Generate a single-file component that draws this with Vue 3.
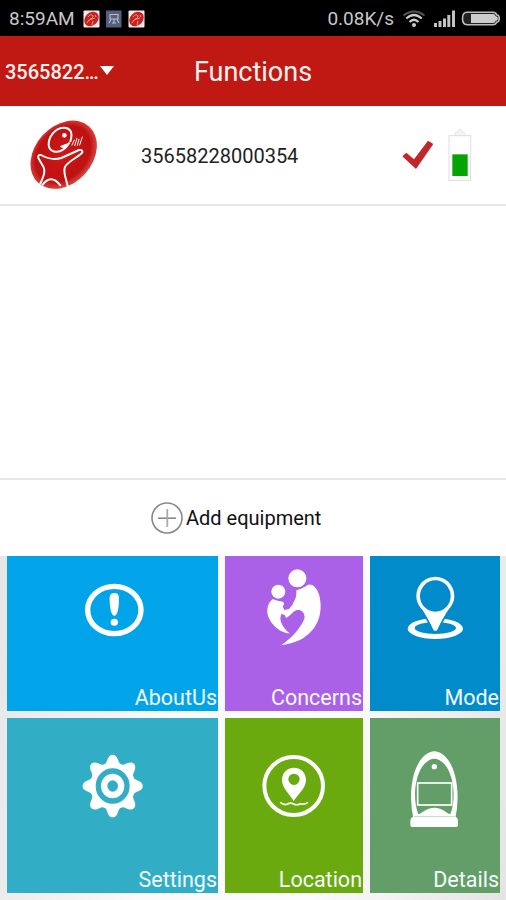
<script setup>
import { ref } from 'vue'

const devices = ref([
  { id: '35658228000354', selected: true }
])
const current = ref('3565822…')

const tiles = [
  { name: 'about', label: 'AboutUs', box: '21 18 633 465' },
  { name: 'concerns', label: 'Concerns', box: '30 18 414 465' },
  { name: 'mode', label: 'Mode', box: '30 18 390 465' },
  { name: 'settings', label: 'Settings', box: '21 24 633 525' },
  { name: 'location', label: 'Location', box: '30 24 414 525' },
  { name: 'details', label: 'Details', box: '30 24 390 525' }
]

const teeth = [0, 45, 90, 135, 180, 225, 270, 315]
</script>

<template>
  <div class="screen">
    <div class="status">
      <span class="time">8:59AM</span>
      <svg class="notes" width="64" height="18" viewBox="0 0 64 18">
        <g v-for="x in [0, 45]" :key="x" :transform="`translate(${x} 0)`">
          <rect x="0.5" y="0.5" width="16" height="17" rx="1" fill="#f4e9e7" />
          <ellipse cx="8.5" cy="9" rx="8" ry="6.3" transform="rotate(-45 8.5 9)" fill="#c9211e" />
          <path d="M5 7q3-4 5-1q0 3-3 3M4 13l2-3 6-2M9 15l1-4M12 5l1 2" fill="none" stroke="#eba39e" stroke-width="0.9" />
        </g>
        <rect x="23" y="0.5" width="15.5" height="17" fill="#56607c" />
        <path d="M27 4.500h8v4.500h-8zM28 9.500l-2 3.500M34 9.500l2 3.500M29 13h4M31 9.500v3" fill="none" stroke="#b9bfd0" stroke-width="1.1" />
      </svg>
      <span class="speed">0.08K/s</span>
      <svg class="signals" width="98" height="20" viewBox="0 0 98 20">
        <g fill="none" stroke-linecap="butt">
          <path d="M1.500 6.500Q12 -1.500 22.500 6.500" stroke="#555" stroke-width="1.800" />
          <path d="M4.300 9.500Q12 2.500 19.700 9.500" stroke="#ccc" stroke-width="2.200" />
          <path d="M7.500 13Q12 8.500 16.500 13" stroke="#ccc" stroke-width="2.200" />
        </g>
        <circle cx="12" cy="16" r="2" fill="#ccc" />
        <path d="M32 14h3v4h-3zM36.500 12h3v6h-3zM41 9.500h3v8.500h-3zM45.300 6h3v12h-3zM50 1.500h3v16.500h-3z" fill="#c4c4c4" />
        <path d="M65 3.300H91Q94 3.300 94.500 5.700Q97.300 6 97.300 9.500T94.500 13.300Q94 15.700 91 15.700H65Q60.500 15.700 60.500 9.500T65 3.300Z" fill="#222" stroke="#bbb" stroke-width="1.600" />
        <path d="M69 5H91Q93 5 93.500 7Q96 7.500 96 9.500T93.500 12Q93 14 91 14H69Z" fill="#ccc" />
      </svg>
    </div>

    <header class="header">
      <div class="picker">
        <span class="current">{{ current }}</span>
        <i class="caret"></i>
      </div>
      <h1>Functions</h1>
    </header>

    <ul class="devices">
      <li v-for="device in devices" :key="device.id" class="device">
        <svg class="avatar" width="70" height="70" viewBox="87 44 210 210">
          <defs>
            <radialGradient id="ball" cx="0.5" cy="0.48" r="0.55">
              <stop offset="0" stop-color="#cf1715" />
              <stop offset="0.75" stop-color="#bd1112" />
              <stop offset="0.9" stop-color="#d53c37" />
              <stop offset="1" stop-color="#b51a19" />
            </radialGradient>
            <clipPath id="oval">
              <ellipse cx="191" cy="148" rx="114" ry="86" transform="rotate(-48 191 148)" />
            </clipPath>
          </defs>
          <ellipse cx="191" cy="148" rx="114" ry="86" transform="rotate(-48 191 148)" fill="url(#ball)" />
          <g clip-path="url(#oval)" fill="none" stroke="#fff" stroke-width="6" stroke-linecap="round" stroke-linejoin="round">
            <path d="M211 108C221 78 208 66 190 67C164 68 145 96 146 119C148 140 172 145 189 133Q200 126 207 114" />
            <path d="M182 123L209 113L196 128Z" fill="#fff" stroke-width="3" />
            <path d="M216 119l7-15M224 121l7-22M232 120l5-18M239 119l8-24" stroke-width="3" />
            <path d="M114 252C122 228 140 204 130 184L115 158Q113 147 123 149Q155 167 184 158L237 134Q248 132 247 141C240 154 205 165 195 185C187 205 203 228 205 254" />
            <path d="M125 242Q152 203 181 240" />
          </g>
          <circle cx="193" cy="90" r="7" fill="#fff" />
        </svg>
        <span class="number">{{ device.id }}</span>
        <svg v-if="device.selected" class="check" width="32" height="30" viewBox="97 107 96 90">
          <path d="M98 156L110 145L133 165L175 109L191 119L139 194Z" fill="#c1272a" />
        </svg>
        <svg class="battery" width="26" height="56" viewBox="233 67 78 168">
          <path d="M258 91v-8h7q0-9 7-9t7 9h7v8" fill="#f4f4f4" stroke="#e2e2e2" stroke-width="2" />
          <rect x="239" y="93" width="65" height="134" fill="#fff" stroke="#ddd" stroke-width="3" />
          <rect x="245" y="97" width="53" height="124" fill="none" stroke="#f6f6f6" stroke-width="2" />
          <rect x="249" y="149" width="46" height="65" fill="#04a404" />
        </svg>
      </li>
    </ul>

    <button class="add">
      <svg width="32" height="32" viewBox="0 0 32 32" fill="none" stroke="#888">
        <circle cx="16" cy="16" r="15" stroke-width="1.600" />
        <path d="M7 16.200h18" stroke-width="1.600" />
        <path d="M16.300 7v18" stroke="#aaa" stroke-width="1.800" />
      </svg>
      <span>Add equipment</span>
    </button>

    <div class="grid">
      <div v-for="tile in tiles" :key="tile.name" class="tile" :class="tile.name">
        <svg class="art" :viewBox="tile.box" preserveAspectRatio="none" fill="#fff">
          <g v-if="tile.name === 'about'">
            <ellipse cx="343" cy="180" rx="80" ry="71" fill="none" stroke="#fff" stroke-width="16" />
            <path d="M343 129C356 129 358 139 357 153Q355 197 343 197Q331 197 329 153C328 139 330 129 343 129Z" />
            <ellipse cx="343" cy="217" rx="11" ry="10.500" />
          </g>
          <g v-else-if="tile.name === 'concerns'">
            <circle cx="247" cy="85" r="27" />
            <circle cx="190" cy="125" r="21" />
            <path d="M173 147Q188 154 203 155Q208 157 207 163L203 170L208 180L222 177Q234 165 239 150Q245 141 244 121C257 117 269 111 279 104Q300 100 312 133C328 194 304 241 262 266Q234 281 199 285C230 266 264 226 269 202C268 185 258 179 246 180C235 182 228 196 213 204L210 196L200 191C190 207 200 230 224 250C190 248 161 216 157 188Q155 162 173 147Z" />
          </g>
          <g v-else-if="tile.name === 'mode'">
            <path fill-rule="evenodd" d="M143 236a83 31 0 1 0 166 0a83 31 0 1 0-166 0ZM164 234a62 18 0 1 0 124 0a62 18 0 1 0-124 0Z" />
            <path d="M190 188L262 188L232 240Q226 246 220 240Z" stroke="#018bcb" stroke-width="6" />
            <path d="M226 80C194 80 169 105 169 138C169 158 178 168 188 181Q204 204 220 239Q226 246 232 239Q248 204 264 181C274 168 283 158 283 138C283 105 258 80 226 80Z" />
            <ellipse cx="226" cy="138" rx="46" ry="47" fill="#018bcb" />
          </g>
          <g v-else-if="tile.name === 'settings'">
            <ellipse cx="338" cy="228" rx="68" ry="71" />
            <path v-for="a in teeth" :key="a" :transform="`translate(338 228) scale(.96 1) rotate(${a})`" d="M-29-61Q-21-65-16-80Q-11-94 0-94T16-80Q21-65 29-61Z" />
            <ellipse cx="338" cy="228" rx="43" ry="45" fill="none" stroke="#31aec5" stroke-width="16" />
            <ellipse cx="338" cy="228" rx="16" ry="17" fill="#31aec5" />
          </g>
          <g v-else-if="tile.name === 'location'">
            <ellipse cx="236" cy="228" rx="88" ry="87" fill="none" stroke="#fff" stroke-width="12" />
            <path fill-rule="evenodd" d="M237 173C216 173 201 189 201 210C201 235 224 252 236 273C249 252 273 235 273 210C273 189 258 173 237 173ZM237 191a17 17 0 1 1 0 34a17 17 0 1 1 0-34Z" />
            <path d="M196 277Q207 287 218 282Q226 277 236 282Q246 287 256 281Q268 285 279 277" fill="none" stroke="#fff" stroke-width="5" />
          </g>
          <g v-else>
            <path fill-rule="evenodd" d="M223 124C196 124 154 160 153 263Q154 298 160 325H286Q292 298 293 263C292 160 250 124 223 124ZM223 146C201 146 168 175 165 250Q165 290 175 312H271Q281 290 281 250C278 175 245 146 223 146Z" />
            <circle cx="223" cy="170" r="8" />
            <rect x="173" y="219" width="102" height="66" fill="#639e68" stroke="#fff" stroke-width="5" />
            <path d="M167 318C184 311 199 293 223 293S262 311 279 318Z" />
            <path d="M160 321H286Q293 322 294 332V345Q294 351 288 351H157Q151 351 151 345V332Q152 322 160 321Z" />
            <path d="M162 320H284" stroke="#a5c7a6" stroke-width="2" />
          </g>
        </svg>
        <span class="label">{{ tile.label }}</span>
      </div>
    </div>
  </div>
</template>

<style>
body {
  margin: 0;
}
</style>

<style scoped>
.screen {
  display: flex;
  flex-direction: column;
  width: 506px;
  height: 900px;
  overflow: hidden;
  background: #fff;
  font-family: Roboto, "Liberation Sans", sans-serif;
}
.status {
  display: flex;
  align-items: center;
  box-sizing: border-box;
  height: 36px;
  padding: 1px 6px 0 9px;
  background: #000;
  color: #c8c8c8;
  font-size: 19px;
}
.notes {
  margin-left: 8px;
}
.speed {
  margin-left: auto;
}
.signals {
  margin-left: 8px;
}
.header {
  display: grid;
  grid-template-columns: 1fr auto 1fr;
  align-items: center;
  box-sizing: border-box;
  height: 70px;
  padding: 2px 5px 0;
  background: #c01914;
  color: #fff2ef;
}
.picker {
  display: flex;
  align-items: center;
  gap: 2px;
  font-size: 20px;
  font-weight: 500;
}
.current {
  width: 93px;
  white-space: nowrap;
}
.caret {
  border: 7px solid transparent;
  border-top: 9px solid #fff;
  border-bottom: 0;
  margin-top: -3px;
}
h1 {
  margin: 0;
  font-size: 27px;
  font-weight: 400;
}
.devices {
  flex: 1;
  margin: 0;
  padding: 0;
  list-style: none;
  border-bottom: 2px solid #e6e6e6;
}
.device {
  display: flex;
  align-items: center;
  box-sizing: border-box;
  height: 100px;
  padding: 0 33px 0 29px;
  border-bottom: 2px solid #e8e8e8;
}
.number {
  flex: 1;
  margin: 2px 0 0 42px;
  font-size: 20px;
  color: #222;
}
.battery {
  margin-left: 13px;
}
.add {
  display: flex;
  align-items: center;
  gap: 3px;
  height: 76px;
  padding: 0 0 1px 151px;
  border: 0;
  background: #fff;
  color: #111;
  font-family: inherit;
  font-size: 20px;
}
.grid {
  display: grid;
  grid-template-columns: 211px 138px 130px;
  grid-template-rows: 155px 175px;
  gap: 7px;
  padding: 0 6px 7px 7px;
  background: linear-gradient(100deg, #e6e6e6, #fafafa 35%, #fcfcfc 65%, #e4e4e4);
}
.tile {
  display: grid;
  min-width: 0;
}
.art,
.label {
  grid-area: 1 / 1;
}
.art {
  width: 100%;
  height: 100%;
  min-height: 0;
}
.label {
  align-self: end;
  justify-self: end;
  padding-right: 1px;
  color: #f4fbff;
  font-size: 21.5px;
  line-height: 26px;
}
.about {
  background: #01a4e8;
}
.concerns {
  background: #ab61e7;
}
.mode {
  background: #018bcb;
}
.settings {
  background: #31aec5;
}
.location {
  background: #6aaa0e;
}
.details {
  background: #639e68;
}
</style>
